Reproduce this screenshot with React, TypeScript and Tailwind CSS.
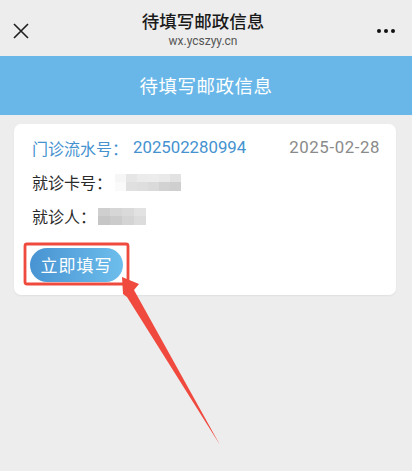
const font = { fontFamily: '"Noto Sans CJK SC", "Noto Sans", sans-serif' };

const Blur = ({ cells, w = 11 }: { cells: string[][]; w?: number }) => (
    <div className="flex flex-col">
        {cells.map((row, i) => (
            <div key={i} className="flex">
                {row.map((c, j) => (
                    <div key={j} className="h-[8.5px]" style={{ background: c, width: w }} />
                ))}
            </div>
        ))}
    </div>
);

const App = () => {
    return (
        <div className="relative w-full h-[471px] bg-[#ededed] overflow-hidden" style={font}>
            <div className="h-14 flex items-center justify-between px-[13px]">
                <svg width="16" height="16" viewBox="0 0 16 16" className="mt-[6px]">
                    <path d="M1 1 L15 15 M15 1 L1 15" stroke="#1f1f1f" strokeWidth="1.6" />
                </svg>
                <div className="flex flex-col items-center pt-[2px]">
                    <p className="text-[17.5px] leading-6 font-medium text-[#1a1a1a]">待填写邮政信息</p>
                    <p className="text-[12px] leading-4 text-[#555]" style={{ fontFamily: "Roboto, sans-serif" }}>wx.ycszyy.cn</p>
                </div>
                <div className="flex gap-[3px] mt-[6px] mr-[4px]">
                    <span className="w-1 h-1 rounded-full bg-[#111]" />
                    <span className="w-1 h-1 rounded-full bg-[#111]" />
                    <span className="w-1 h-1 rounded-full bg-[#111]" />
                </div>
            </div>

            <div className="h-[59px] bg-[#69b7e8] flex items-center justify-center">
                <p className="text-[18.5px] text-white tracking-[0.5px]">待填写邮政信息</p>
            </div>

            <div className="mt-[9px] ml-[14px] w-[382px] bg-white rounded-[7px] shadow-[0_1px_2px_rgba(0,0,0,0.06)] pt-[12px] px-[18px] pb-[13px]">
                <div className="h-6 flex items-center justify-between text-[16px]">
                    <div className="flex items-center text-[#4592cf]">
                        <span>门诊流水号：</span>
                        <span className="ml-[5px]" style={{ fontFamily: "Roboto, sans-serif", fontSize: "16.8px" }}>202502280994</span>
                    </div>
                    <span className="text-[#8a8a8a] mr-[-2px] tracking-[0.6px]" style={{ fontFamily: "Roboto, sans-serif", fontSize: "16.8px" }}>2025-02-28</span>
                </div>
                <div className="h-6 mt-[10px] flex items-center text-[16px] text-[#2a2a2a]">
                    <span>就诊卡号：</span>
                    <div className="ml-[3px]">
                        <Blur cells={[
                            ["#f6f6f6", "#e6e6e6", "#ebebeb", "#ececec", "#e9e9e9", "#e2e2e2"],
                            ["#fafafa", "#e0e0e0", "#dedede", "#dadada", "#d2d2d2", "#cfcfcf"],
                        ]} />
                    </div>
                </div>
                <div className="h-6 mt-[10px] flex items-center text-[16px] text-[#2a2a2a]">
                    <span>就诊人：</span>
                    <div className="ml-[2px]">
                        <Blur w={12} cells={[
                            ["#cfcfcf", "#d6d6d6", "#dadada", "#e2e2e2"],
                            ["#c6c6c6", "#cbcbcb", "#d4d4d4", "#dcdcdc"],
                        ]} />
                    </div>
                </div>
                <button className="mt-[20px] ml-[-2px] h-[34px] w-[93px] rounded-full bg-gradient-to-r from-[#4893d2] to-[#6dbeec] text-white text-[17px] tracking-[1px] flex items-center justify-center">
                    立即填写
                </button>
            </div>

            <svg className="absolute inset-0 pointer-events-none" width="412" height="471" viewBox="0 0 412 471">
                <rect x="25" y="244" width="103" height="40" rx="2" fill="none" stroke="#ee4a3d" strokeWidth="2.8" />
                <polygon points="122,277 139,284 134,290 220,445 127,297 123,294" fill="#f04a3e" />
            </svg>
        </div>
    );
};

export default App;
